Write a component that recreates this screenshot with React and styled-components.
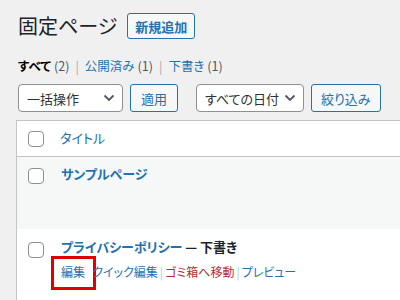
import React from 'react';
import styled, { createGlobalStyle } from 'styled-components';

const GlobalStyle = createGlobalStyle`
  html, body {
    margin: 0;
    padding: 0;
    background: #f0f0f1;
    font-family: "Noto Sans CJK JP", "Noto Sans", sans-serif;
    font-feature-settings: "palt";
    color: #1d2327;
    overflow: hidden;
  }
`;

const Wrap = styled.div`
  width: 400px;
  height: 300px;
  padding-left: 16px;
  box-sizing: border-box;
  overflow: hidden;
`;

const TitleBar = styled.div`
  display: flex;
  align-items: center;
  height: 26px;
  padding-top: 13px;
  padding-left: 2px;
`;

const Heading = styled.h1`
  margin: 0;
  font-size: 20px;
  font-weight: 400;
  line-height: 26px;
  color: #1d2327;
`;

const Button = styled.button`
  box-sizing: border-box;
  height: ${p => p.$h || 28}px;
  padding: 0 ${p => p.$pad || 9}px;
  margin-left: ${p => p.$ml || 0}px;
  font-family: inherit;
  font-feature-settings: "palt";
  font-size: 13px;
  font-weight: ${p => (p.$bold ? 600 : 400)};
  line-height: 1;
  color: #2271b1;
  background: #f6f7f7;
  border: 1px solid #2271b1;
  border-radius: 3px;
  white-space: nowrap;
`;

const Filters = styled.ul`
  display: flex;
  align-items: center;
  list-style: none;
  margin: 18px 0 0 2px;
  padding: 0;
  height: 18px;
  font-size: 12.5px;
  line-height: 18px;
  color: #50575e;
`;

const FilterLink = styled.li`
  color: ${p => (p.$current ? '#000' : '#2271b1')};
  font-weight: ${p => (p.$current ? 600 : 400)};
  span {
    color: #50575e;
    font-weight: 400;
    margin-left: 3px;
  }
`;

const Sep = styled.li`
  margin: 0 6px;
  color: #a7aaad;
`;

const TableNav = styled.div`
  display: flex;
  align-items: center;
  margin: 9px 0 0 2px;
  height: 28px;
`;

const Select = styled.div`
  box-sizing: border-box;
  display: flex;
  align-items: center;
  justify-content: space-between;
  width: ${p => p.$w}px;
  height: 28px;
  padding: 0 7px 0 8px;
  margin-left: ${p => p.$ml || 0}px;
  font-size: 13px;
  white-space: nowrap;
  color: #2c3338;
  background: #fff;
  border: 1px solid #8c8f94;
  border-radius: 4px;
`;

const Table = styled.div`
  margin-top: 8px;
  background: #fff;
  border: 1px solid #c3c4c7;
  border-right: none;
  border-bottom: none;
  height: 300px;
`;

const Row = styled.div`
  display: flex;
  align-items: flex-start;
  background: ${p => p.$bg || '#fff'};
  border-bottom: ${p => (p.$header ? '1px solid #c3c4c7' : 'none')};
  height: ${p => p.$h}px;
  box-sizing: border-box;
`;

const CheckCell = styled.div`
  width: 42px;
  padding-left: 11px;
  padding-top: ${p => p.$top}px;
  box-sizing: border-box;
  flex: none;
`;

const Box = styled.div`
  width: 16px;
  height: 16px;
  box-sizing: border-box;
  border: 1px solid #8c8f94;
  border-radius: 4px;
  background: #fff;
`;

const TitleCell = styled.div`
  padding-left: ${p => p.$pl || 1}px;
  padding-top: ${p => p.$top}px;
`;

const HeadTitle = styled.div`
  font-size: 13px;
  line-height: 20px;
  color: #2271b1;
`;

const RowTitle = styled.div`
  font-size: 13px;
  font-weight: 700;
  line-height: 20px;
  color: #1d2327;
  a {
    color: #2271b1;
    text-decoration: none;
  }
`;

const Actions = styled.div`
  display: flex;
  align-items: center;
  margin-top: 5px;
  font-size: 12px;
  line-height: 20px;
`;

const Action = styled.span`
  position: relative;
  color: ${p => (p.$danger ? '#b32d2e' : '#2271b1')};
`;

const Highlight = styled.span`
  position: absolute;
  left: -10px;
  top: -6px;
  width: 45px;
  height: 34px;
  box-sizing: border-box;
  border: 3px solid #e00000;
`;

const Pipe = styled.span`
  margin: 0 2px;
  color: #c3c4c7;
`;

const Chevron = () => (
  <svg width="12" height="8" viewBox="0 0 12 8">
    <polyline points="1.5,1.5 6,6 10.5,1.5" fill="none" stroke="#50575e" strokeWidth="1.8" />
  </svg>
);

const App = () => (
  <Wrap>
    <GlobalStyle />
    <TitleBar>
      <Heading>固定ページ</Heading>
      <Button $h={26} $pad={7} $ml={10} $bold>新規追加</Button>
    </TitleBar>
    <Filters>
      <FilterLink $current>すべて<span>(2)</span></FilterLink>
      <Sep>|</Sep>
      <FilterLink>公開済み<span>(1)</span></FilterLink>
      <Sep>|</Sep>
      <FilterLink>下書き<span>(1)</span></FilterLink>
    </Filters>
    <TableNav>
      <Select $w={105}>一括操作<Chevron /></Select>
      <Button $ml={7} $pad={10}>適用</Button>
      <Select $w={108} $ml={18}>すべての日付<Chevron /></Select>
      <Button $ml={7} $pad={9}>絞り込み</Button>
    </TableNav>
    <Table>
      <Row $header $h={36}>
        <CheckCell $top={10}><Box /></CheckCell>
        <TitleCell $top={7}><HeadTitle>タイトル</HeadTitle></TitleCell>
      </Row>
      <Row $bg="#f6f7f7" $h={72}>
        <CheckCell $top={11}><Box /></CheckCell>
        <TitleCell $pl={2} $top={7}><RowTitle><a>サンプルページ</a></RowTitle></TitleCell>
      </Row>
      <Row $h={80}>
        <CheckCell $top={13}><Box /></CheckCell>
        <TitleCell $pl={2} $top={8}>
          <RowTitle><a>プライバシーポリシー</a> — 下書き</RowTitle>
          <Actions>
            <Action>編集<Highlight /></Action>
            <Pipe style={{ visibility: 'hidden' }}>|</Pipe>
            <Action>クイック編集</Action>
            <Pipe>|</Pipe>
            <Action $danger>ゴミ箱へ移動</Action>
            <Pipe>|</Pipe>
            <Action>プレビュー</Action>
          </Actions>
        </TitleCell>
      </Row>
    </Table>
  </Wrap>
);

export default App;
